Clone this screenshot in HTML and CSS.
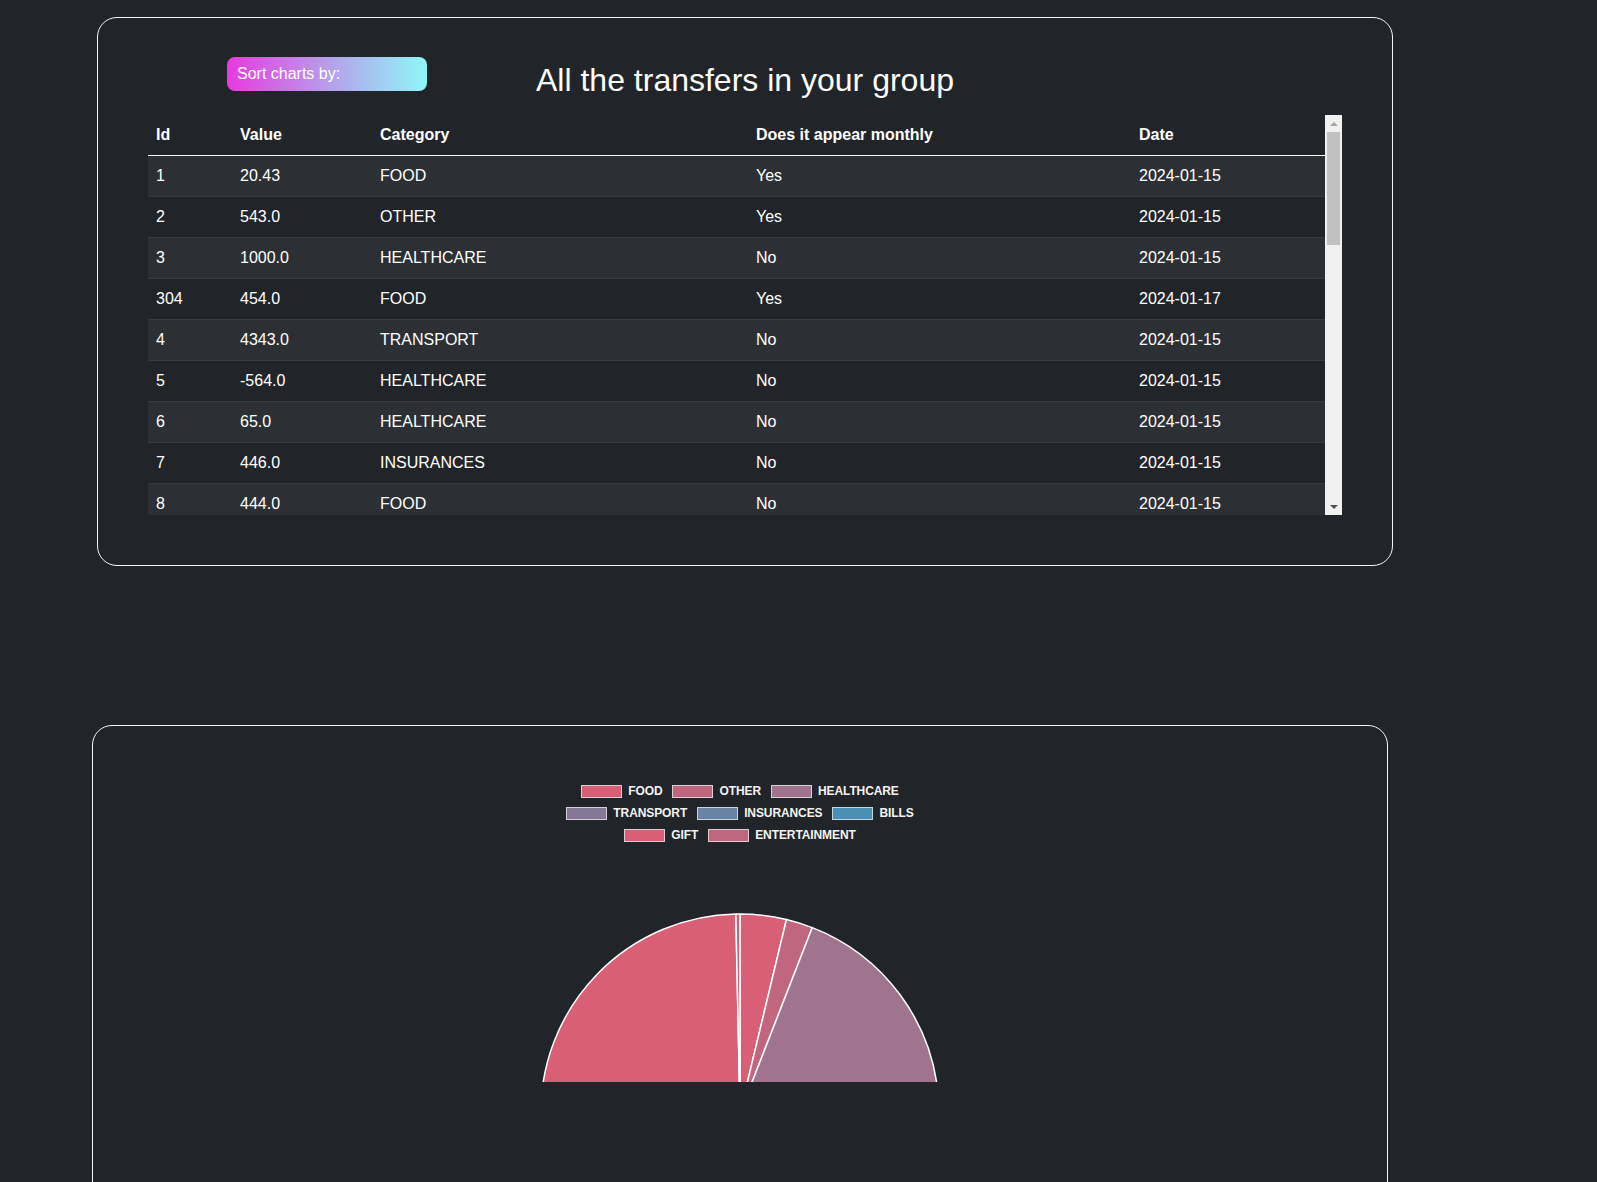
FILE: index.html
```html
<!DOCTYPE html>
<html lang="en">
<head>
<meta charset="utf-8">
<title>Transfers</title>
<link rel="stylesheet" href="styles.css">
</head>
<body>
<section class="card card-table">
  <div class="card-head">
    <div class="sort-cell"><button class="sort-btn">Sort charts by:</button></div>
    <h2 class="title">All the transfers in your group</h2>
    <div></div>
  </div>
  <div class="scroll-box">
    <div class="table-wrap">
      <table class="data-table">
        <colgroup>
          <col class="c-id"><col class="c-val"><col class="c-cat"><col class="c-mon"><col class="c-date">
        </colgroup>
        <thead>
          <tr><th>Id</th><th>Value</th><th>Category</th><th>Does it appear monthly</th><th>Date</th></tr>
        </thead>
        <tbody>
          <tr><td>1</td><td>20.43</td><td>FOOD</td><td>Yes</td><td>2024-01-15</td></tr>
          <tr><td>2</td><td>543.0</td><td>OTHER</td><td>Yes</td><td>2024-01-15</td></tr>
          <tr><td>3</td><td>1000.0</td><td>HEALTHCARE</td><td>No</td><td>2024-01-15</td></tr>
          <tr><td>304</td><td>454.0</td><td>FOOD</td><td>Yes</td><td>2024-01-17</td></tr>
          <tr><td>4</td><td>4343.0</td><td>TRANSPORT</td><td>No</td><td>2024-01-15</td></tr>
          <tr><td>5</td><td>-564.0</td><td>HEALTHCARE</td><td>No</td><td>2024-01-15</td></tr>
          <tr><td>6</td><td>65.0</td><td>HEALTHCARE</td><td>No</td><td>2024-01-15</td></tr>
          <tr><td>7</td><td>446.0</td><td>INSURANCES</td><td>No</td><td>2024-01-15</td></tr>
          <tr><td>8</td><td>444.0</td><td>FOOD</td><td>No</td><td>2024-01-15</td></tr>
        </tbody>
      </table>
    </div>
    <div class="scrollbar">
      <div class="sb-btn"><span class="arrow-up"></span></div>
      <div class="sb-track"><div class="sb-thumb"></div></div>
      <div class="sb-btn"><span class="arrow-down"></span></div>
    </div>
  </div>
</section>

<section class="card card-chart">
  <div class="legend">
    <div class="legend-row">
      <span class="lg-item"><span class="lg-box c-food"></span>FOOD</span>
      <span class="lg-item"><span class="lg-box c-other"></span>OTHER</span>
      <span class="lg-item"><span class="lg-box c-health"></span>HEALTHCARE</span>
    </div>
    <div class="legend-row">
      <span class="lg-item"><span class="lg-box c-transport"></span>TRANSPORT</span>
      <span class="lg-item"><span class="lg-box c-ins"></span>INSURANCES</span>
      <span class="lg-item"><span class="lg-box c-bills"></span>BILLS</span>
    </div>
    <div class="legend-row">
      <span class="lg-item"><span class="lg-box c-gift"></span>GIFT</span>
      <span class="lg-item"><span class="lg-box c-ent"></span>ENTERTAINMENT</span>
    </div>
  </div>
  <svg class="pie" width="400" height="235" viewBox="0 0 400 235">
    <g stroke="#ffffff" stroke-width="1.5" stroke-linejoin="round">
      <path fill="#d95f76" d="M200 266 L200 67 A199 199 0 0 1 246.45 72.49 Z"/>
      <path fill="#c0667f" d="M200 266 L246.45 72.49 A199 199 0 0 1 272.3 80.59 Z"/>
      <path fill="#a0748f" d="M200 266 L272.3 80.59 A199 199 0 0 1 299.5 438.33 Z"/>
      <path fill="#857896" d="M200 266 L299.5 438.33 A199 199 0 0 1 251.51 458.21 Z"/>
      <path fill="#6883a3" d="M200 266 L251.51 458.21 A199 199 0 0 1 217.35 464.24 Z"/>
      <path fill="#4a90b5" d="M200 266 L217.35 464.24 A199 199 0 0 1 200 465 Z"/>
      <path fill="#d95f76" d="M200 266 L200 465 A199 199 0 0 1 195.83 67.04 Z"/>
      <path fill="#c0667f" d="M200 266 L195.83 67.04 A199 199 0 0 1 200 67 Z"/>
    </g>
  </svg>
</section>
</body>
</html>
```

FILE: styles.css
```css
html, body {
  height: 100%;
  overflow: hidden;
}

body {
  margin: 0;
  background: #212529;
  color: #ffffff;
  font-family: "Liberation Sans", Arial, Helvetica, sans-serif;
  font-size: 16px;
}

.card {
  box-sizing: border-box;
  width: 1296px;
  border: 1px solid #f4f5f6;
  border-radius: 20px;
  background: #212529;
}

.card-table {
  margin: 17px 0 0 97px;
  padding: 39px 50px 50px;
}

.card-head {
  display: grid;
  grid-template-columns: 1fr auto 1fr;
  align-items: start;
  margin-bottom: 16px;
}

.sort-cell {
  padding-left: 79px;
}

.sort-btn {
  display: block;
  box-sizing: border-box;
  width: 200px;
  height: 34px;
  padding: 0 0 1px 10px;
  border: 0;
  border-radius: 8px;
  background: linear-gradient(to right, #e73adf 0%, #b79deb 50%, #8ef7f8 100%);
  color: #ffffff;
  font-family: inherit;
  font-size: 16px;
  line-height: 32px;
  text-align: left;
}

.title {
  margin: 4px 0 0;
  font-size: 32px;
  font-weight: 400;
  line-height: 38px;
  color: #ffffff;
}

.scroll-box {
  display: flex;
  height: 400px;
}

.table-wrap {
  flex: 1;
  overflow: hidden;
}

.data-table {
  width: 100%;
  border-collapse: collapse;
  table-layout: fixed;
}

.c-id { width: 84px; }
.c-val { width: 140px; }
.c-cat { width: 376px; }
.c-mon { width: 383px; }
.c-date { width: 194px; }

.data-table th,
.data-table td {
  padding: 8px;
  line-height: 24px;
  text-align: left;
  white-space: nowrap;
}

.data-table th {
  font-weight: 700;
  border-bottom: 1px solid #ffffff;
}

.data-table td {
  border-bottom: 1px solid #373b3e;
}

.data-table tbody tr:nth-child(odd) {
  background: #2c3034;
}

.scrollbar {
  display: flex;
  flex-direction: column;
  width: 17px;
  background: #f1f1f1;
}

.sb-btn {
  height: 17px;
  display: flex;
  align-items: center;
  justify-content: center;
}

.arrow-up {
  width: 0;
  height: 0;
  border-left: 4px solid transparent;
  border-right: 4px solid transparent;
  border-bottom: 4px solid #a3a3a3;
}

.arrow-down {
  width: 0;
  height: 0;
  border-left: 4px solid transparent;
  border-right: 4px solid transparent;
  border-top: 4px solid #505050;
}

.sb-track {
  flex: 1;
  padding: 0 2px;
}

.sb-thumb {
  height: 113px;
  background: #c1c1c1;
}

.card-chart {
  margin: 159px 0 0 92px;
  height: 700px;
  padding: 54px 50px 0;
}

.legend {
  display: flex;
  flex-direction: column;
  align-items: center;
}

.legend-row {
  display: flex;
  align-items: center;
  gap: 10px;
  height: 22px;
}

.lg-item {
  display: flex;
  align-items: center;
  font-size: 12px;
  font-weight: 700;
  line-height: 22px;
  letter-spacing: -0.1px;
  color: #f4f4f4;
}

.lg-box {
  box-sizing: border-box;
  width: 41px;
  height: 13px;
  margin-right: 6px;
  border: 1.5px solid rgba(230, 230, 235, 0.8);
}

.c-food { background: #d95f76; }
.c-other { background: #c0667f; }
.c-health { background: #a0748f; }
.c-transport { background: #857896; }
.c-ins { background: #6883a3; }
.c-bills { background: #4a90b5; }
.c-gift { background: #d95f76; }
.c-ent { background: #c0667f; }

.pie {
  display: block;
  margin: 1px auto 0;
  overflow: hidden;
}
```
